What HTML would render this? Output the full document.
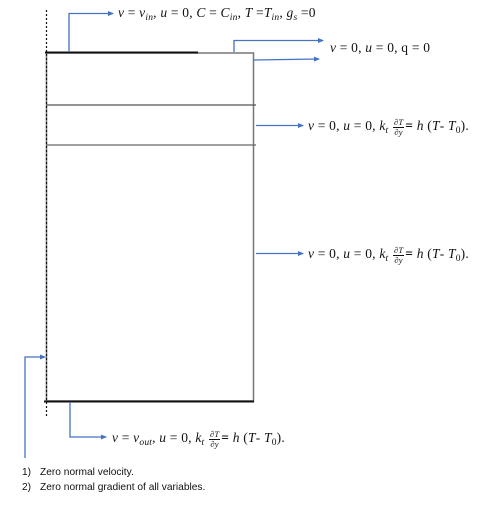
<!DOCTYPE html>
<html><head><meta charset="utf-8"><style>
html,body{margin:0;padding:0;background:#fff;width:483px;height:508px;overflow:hidden;position:relative}
svg{display:block;position:absolute;left:0;top:0}
.e{position:absolute;white-space:nowrap;font-family:"Liberation Serif",serif;font-size:13.5px;color:#111;line-height:14px;letter-spacing:0.2px}
.e i{font-style:italic}
sub{font-size:9.5px;vertical-align:-3px;line-height:0;font-style:italic}
.f{display:inline-block;vertical-align:middle;text-align:center;font-size:8.5px;font-style:italic;line-height:8.5px;margin:0 1px}
.f span{display:block;padding:0 1px}
.f span:first-child{border-bottom:0.8px solid #111}
b{font-weight:bold}
.l{position:absolute;white-space:nowrap;font-family:"Liberation Sans",sans-serif;font-size:10.2px;color:#111}
</style></head><body>
<svg width="483" height="508" viewBox="0 0 483 508" xmlns="http://www.w3.org/2000/svg">
<defs><marker id="a" markerWidth="6" markerHeight="6" refX="5" refY="3" orient="auto" markerUnits="userSpaceOnUse"><path d="M0,0.5 L6,3 L0,5.5z" fill="#4472c4"/></marker></defs>
<rect x="46.5" y="53" width="207" height="348" fill="none" stroke="#777" stroke-width="1.5"/>
<line x1="46" y1="105" x2="256" y2="105" stroke="#555" stroke-width="1.2"/>
<line x1="46" y1="145" x2="256" y2="145" stroke="#666" stroke-width="1.2"/>
<line x1="45" y1="52.5" x2="198" y2="52.5" stroke="#111" stroke-width="2"/>
<line x1="44" y1="401.5" x2="254" y2="401.5" stroke="#111" stroke-width="2"/>
<line x1="46.5" y1="10" x2="46.5" y2="416" stroke="#111" stroke-width="1.2" stroke-dasharray="2,2"/>
<g stroke="#4472c4" stroke-width="1.3" fill="none" marker-end="url(#a)">
<polyline points="69,52 69,13.5 113,13.5"/>
<polyline points="234,52 234,40.5 323,40.5"/>
<polyline points="254,60 319,59"/>
<polyline points="256,125.5 303,125.5"/>
<polyline points="256,253.5 303,253.5"/>
<polyline points="25,458 25,357 45,357"/>
<polyline points="70,402 70,437 106,437"/>
</g>
</svg>
<div class="e" style="left:118px;top:6px"><i>v</i> = <i>v</i><sub>in</sub>, <i>u</i> = 0, <i>C</i> = <i>C</i><sub>in</sub>, <i>T</i> =<i>T</i><sub>in</sub>, <i>g</i><sub>s</sub> =0</div>
<div class="e" style="left:330px;top:41px"><i>v</i> = 0, <i>u</i> = 0, q = 0</div>
<div class="e" style="left:308px;top:118px"><i>v</i> = 0, <i>u</i> = 0, <i>k</i><sub>t</sub> <span class="f"><span>∂T</span><span>∂y</span></span><b>=</b> <i>h</i> (<i>T</i>- <i>T</i><sub style="font-style:normal">0</sub>).</div>
<div class="e" style="left:308px;top:246px"><i>v</i> = 0, <i>u</i> = 0, <i>k</i><sub>t</sub> <span class="f"><span>∂T</span><span>∂y</span></span><b>=</b> <i>h</i> (<i>T</i>- <i>T</i><sub style="font-style:normal">0</sub>).</div>
<div class="e" style="left:112px;top:430px"><i>v</i> = <i>v</i><sub>out</sub>, <i>u</i> = 0, <i>k</i><sub>t</sub> <span class="f"><span>∂T</span><span>∂y</span></span><b>=</b> <i>h</i> (<i>T</i>- <i>T</i><sub style="font-style:normal">0</sub>).</div>
<div class="l" style="left:22px;top:467px">1)</div><div class="l" style="left:40px;top:467px">Zero normal velocity.</div>
<div class="l" style="left:22px;top:482px">2)</div><div class="l" style="left:40px;top:482px">Zero normal gradient of all variables.</div>
</body></html>
